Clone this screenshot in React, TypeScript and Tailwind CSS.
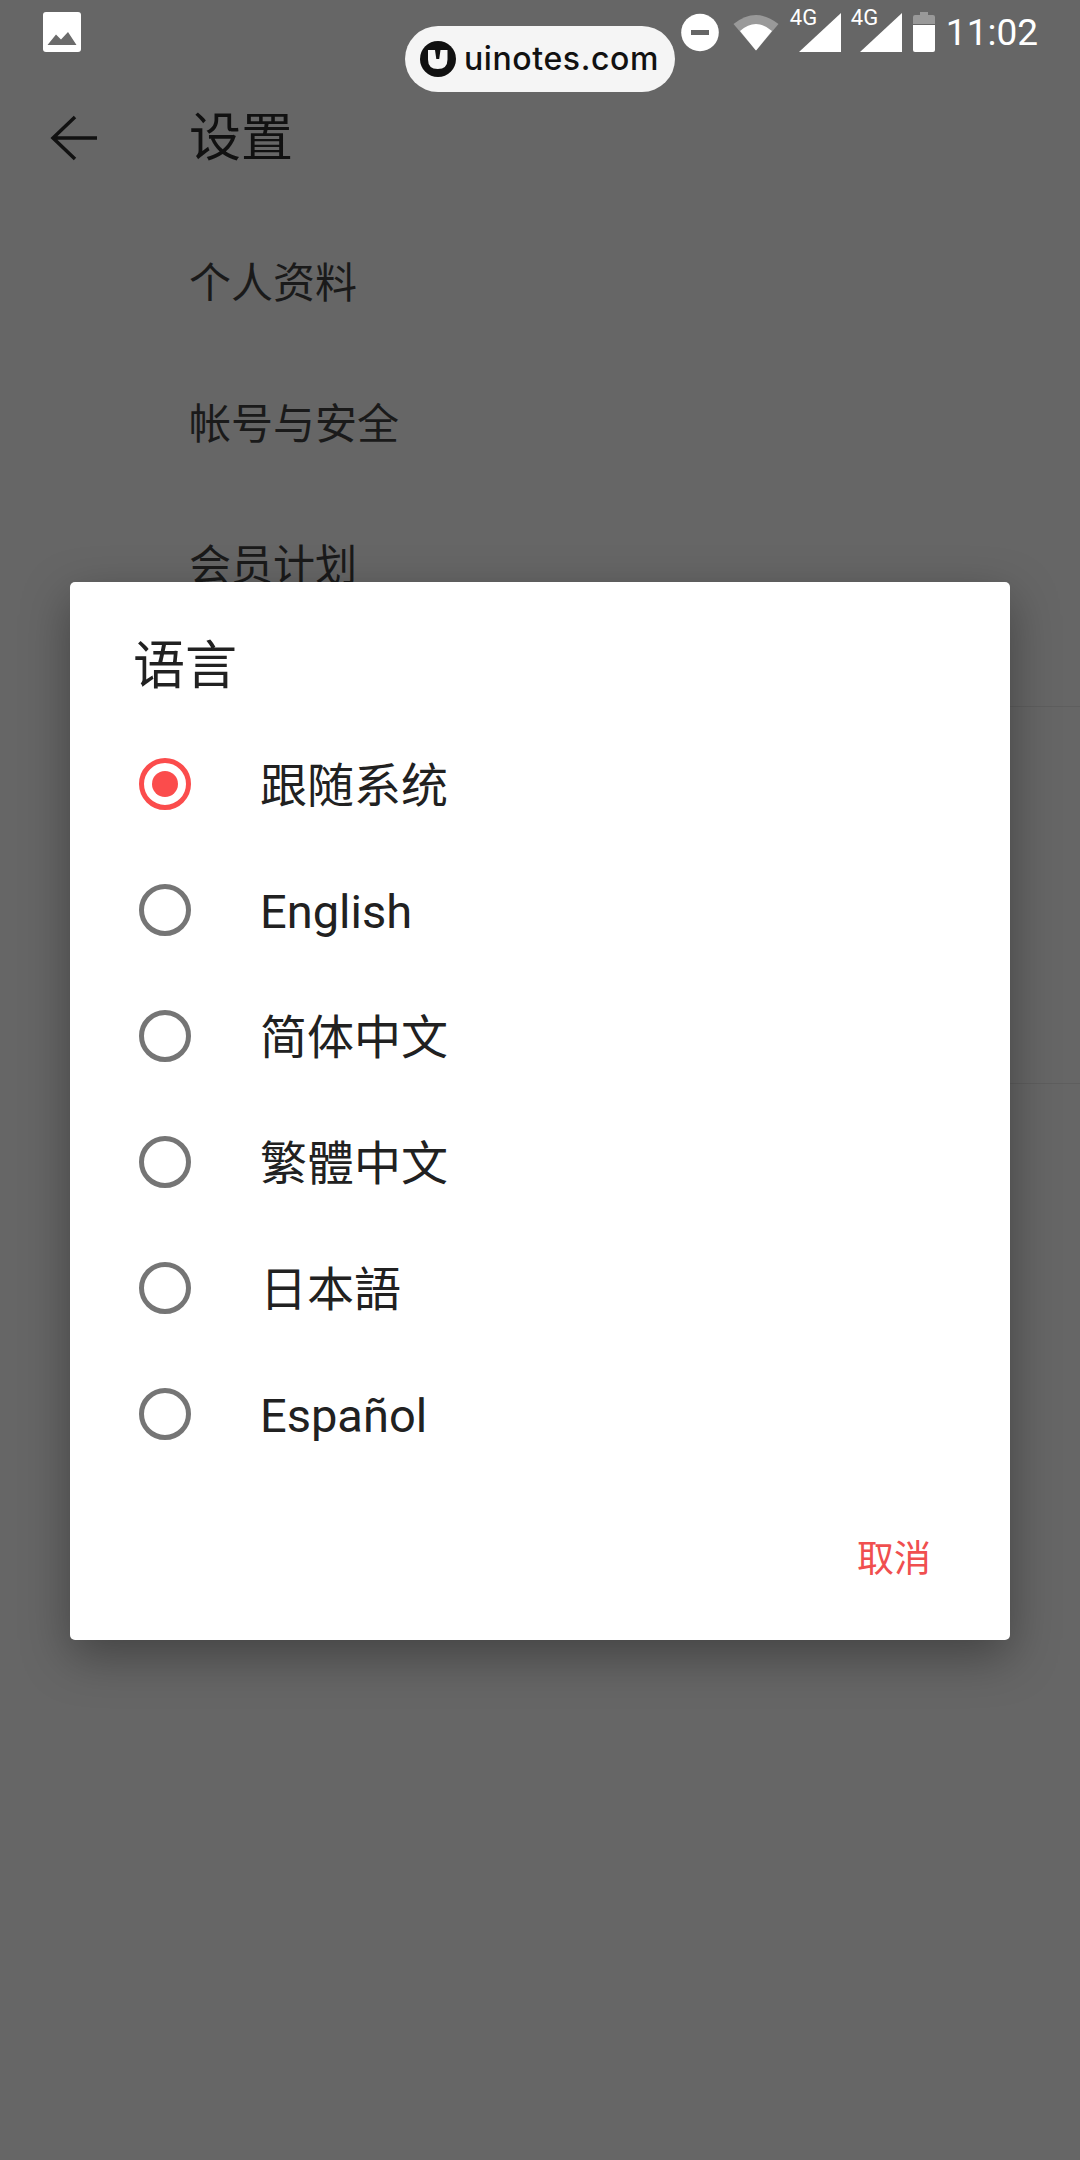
const cjk = "font-['Roboto','Noto_Sans_CJK_SC',sans-serif]";

function Radio({ on }: { on?: boolean }) {
  return (
    <span className={`flex h-[52px] w-[52px] shrink-0 items-center justify-center rounded-full border-[5px] ${on ? "border-[#fb4c4c]" : "border-[#757575]"}`}>
      {on && <span className="h-[26px] w-[26px] rounded-full bg-[#fb4c4c]" />}
    </span>
  );
}

function Signal() {
  return (
    <div className="relative h-[39px] w-[42px] shrink-0">
      <span className="absolute left-[-9px] top-[-6px] font-['Roboto',sans-serif] text-[22px] leading-[22px] text-white">4G</span>
      <svg width="42" height="39" viewBox="0 0 42 39" className="block">
        <path d="M0 39 L42 0 V39 Z" fill="#fff" />
      </svg>
    </div>
  );
}

function StatusBar() {
  return (
    <div className="flex h-[98px] w-full items-start justify-between pl-[43px] pr-[42px] pt-[12px]">
      <svg width="38" height="40" viewBox="0 0 38 40" className="shrink-0">
        <rect width="38" height="40" rx="3" fill="#fff" />
        <path d="M4.5 33 L13 22.5 L18 27.5 L25 20 L33.5 33 Z" fill="#6b6b6b" />
      </svg>
      <div className="flex items-start pt-[1px]">
        <svg width="38" height="39" viewBox="0 0 38 39" className="shrink-0">
          <circle cx="19" cy="19.5" r="18.8" fill="#fff" />
          <rect x="10" y="17" width="18" height="5" fill="#666" />
        </svg>
        <svg width="46" height="38" viewBox="0 0 46 38" className="ml-[14px] shrink-0">
          <path d="M0.5 11 Q23 -7 45.5 11 L23.5 37 Q23 37.5 22.5 37 Z" fill="#999" />
          <path d="M7 18 Q23 4 39 18 L23.5 37 Q23 37.5 22.5 37 Z" fill="#fff" />
        </svg>
        <div className="ml-[20px] flex gap-[19px]">
          <Signal />
          <Signal />
        </div>
        <svg width="22" height="40" viewBox="0 0 22 40" className="ml-[11px] mt-[-1px] shrink-0">
          <path d="M7 0 H15 V3 H20 Q22 3 22 5 V12 H0 V5 Q0 3 2 3 H7 Z" fill="#999" />
          <path d="M0 13 H22 V38 Q22 40 20 40 H2 Q0 40 0 38 Z" fill="#fff" />
        </svg>
        <span className="ml-[11px] font-['Roboto',sans-serif] text-[37px] leading-[40px] text-white">11:02</span>
      </div>
    </div>
  );
}

const rows = ["个人资料", "帐号与安全", "会员计划"];
const langs = ["跟随系统", "English", "简体中文", "繁體中文", "日本語", "Español"];

export default function App() {
  return (
    <div className={`relative h-[2160px] w-[1080px] overflow-hidden bg-[#666666] ${cjk}`}>
      <StatusBar />
      <div className="flex h-[80px] items-center pl-[50px]">
        <svg width="48" height="48" viewBox="0 0 48 48" fill="none" stroke="#111" strokeWidth="3.5" className="shrink-0">
          <path d="M47 24 H4 M25 3 L3 24 L25 45" />
        </svg>
        <span className="ml-[91px] pt-[2px] text-[52px] leading-none text-[#111]">设置</span>
      </div>
      <div className="ml-[189px] mt-[35px] flex h-[494px] flex-col border-b border-[#5e5e5e]">
        {rows.map((t) => (
          <div key={t} className="flex h-[141px] items-center text-[42px] leading-none text-[#1a1a1a]">{t}</div>
        ))}
      </div>
      <div className="ml-[189px] h-[377px] border-b border-[#5e5e5e]" />

      {/* watermark pill lying over the page */}
      <div className="absolute left-[405px] top-[26px] flex h-[66px] w-[270px] items-center rounded-[33px] bg-[#f5f5f5] pl-[15px]">
        <svg width="36" height="36" viewBox="0 0 36 36" className="shrink-0">
          <circle cx="18" cy="18" r="18" fill="#111" />
          <path d="M8 9 H15 L16.3 18 H19.2 L20.5 9 H27.5 V18.5 Q27.5 28 17.75 28 Q8 28 8 18.5 Z" fill="#f5f5f5" />
        </svg>
        <span className="ml-[8px] font-['Inter',sans-serif] text-[32px] font-medium leading-none tracking-[0.6px] text-[#111]">uinotes.com</span>
      </div>

      {/* modal dialog */}
      <div className="absolute left-[70px] top-[582px] flex h-[1058px] w-[940px] flex-col rounded-[5px] bg-white shadow-[0_16px_48px_rgba(0,0,0,0.35)]">
        <div className="pl-[63px] pt-[55px] text-[52px] leading-[60px] text-[#212121]">语言</div>
        <div className="mt-[24px] flex flex-col">
          {langs.map((l, i) => (
            <div key={l} className="flex h-[126px] items-center gap-[69px] pl-[69px]">
              <Radio on={i === 0} />
              <span className="pt-[2px] text-[47px] leading-none text-[#212121]">{l}</span>
            </div>
          ))}
        </div>
        <div className="mt-auto flex justify-end pb-[58px] pr-[79px] text-[37px] leading-[44px] text-[#f04f4f]">取消</div>
      </div>
    </div>
  );
}
